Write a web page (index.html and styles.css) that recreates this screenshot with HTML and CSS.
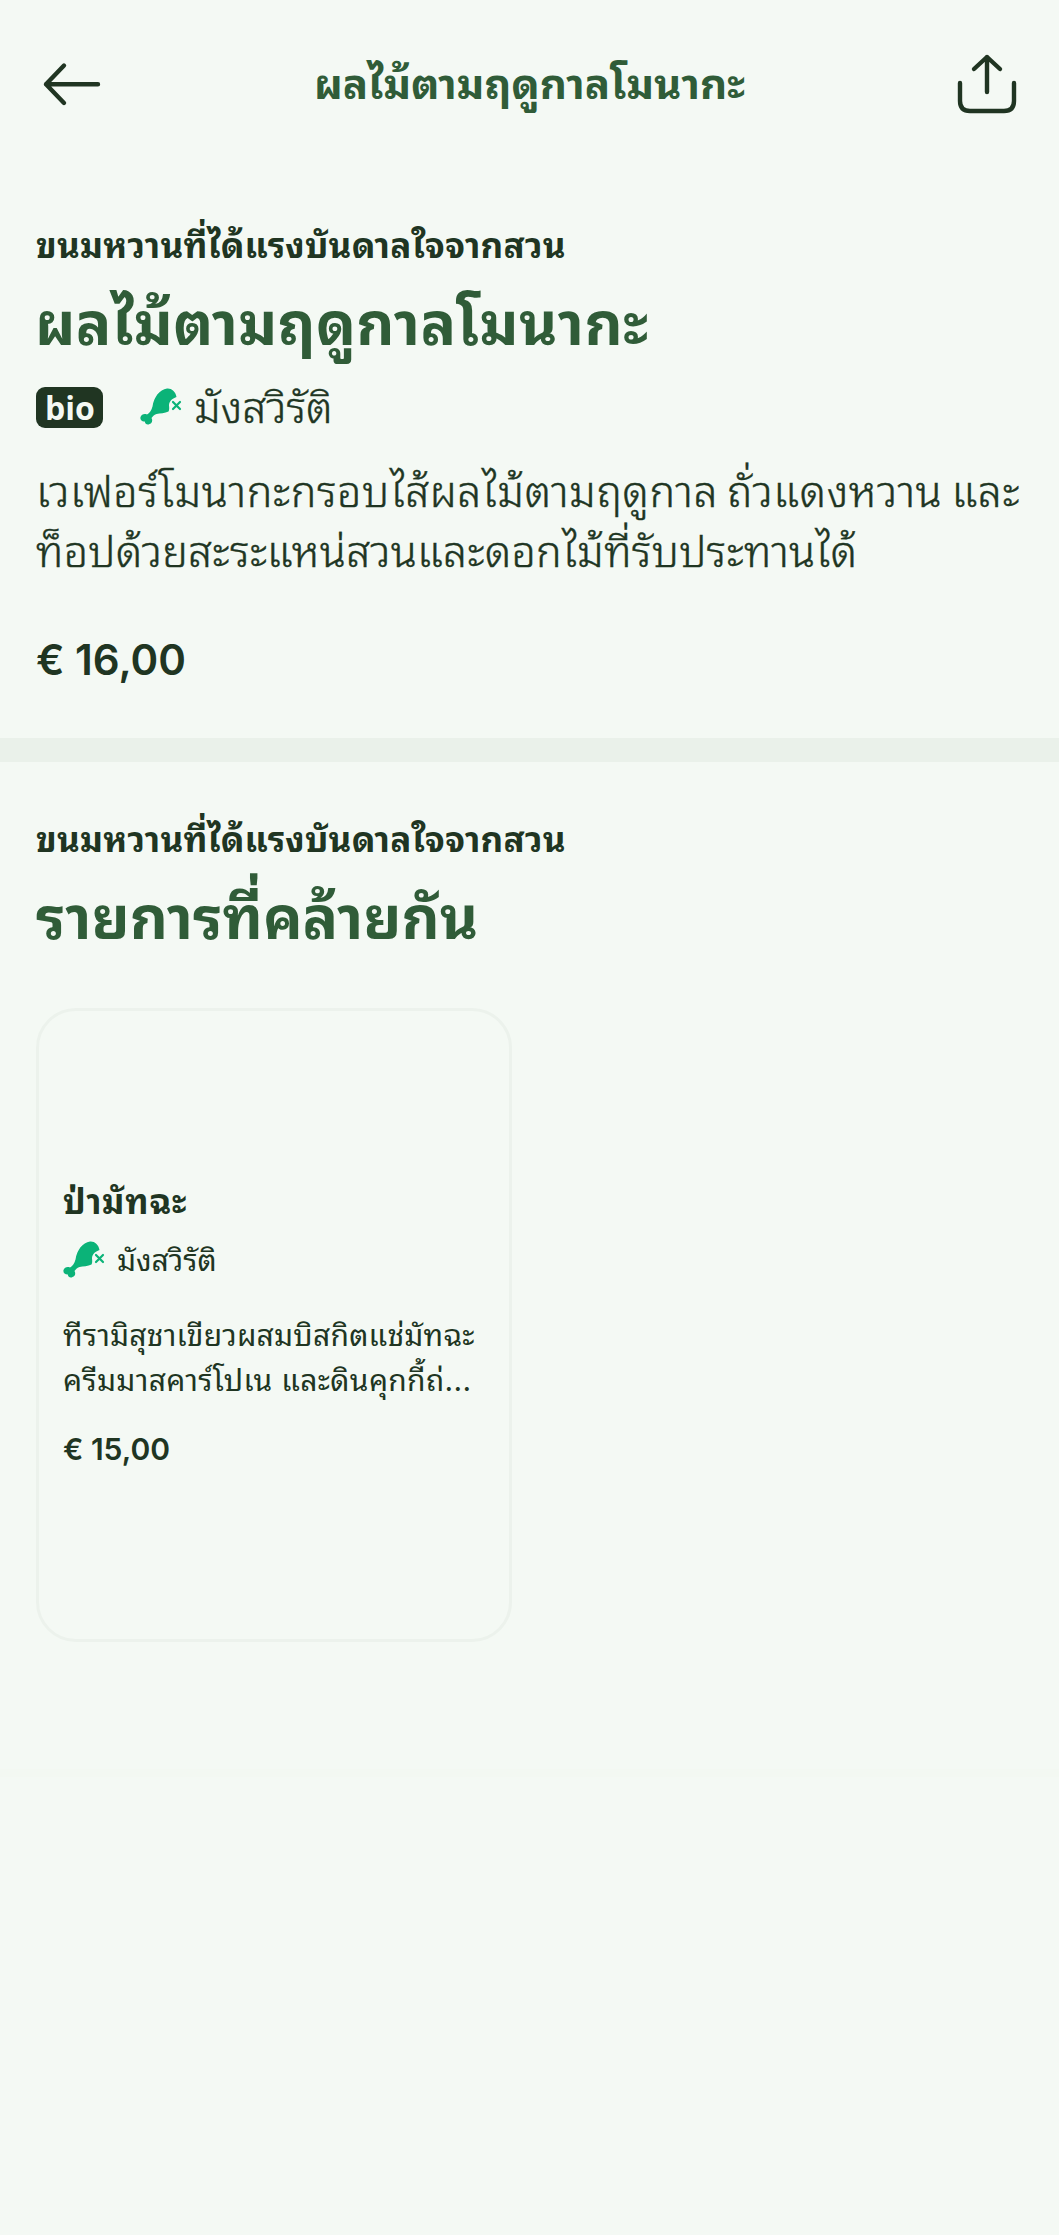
FILE: index.html
```html
<!DOCTYPE html>
<html lang="th">
<head>
<meta charset="utf-8">
<title>ผลไม้ตามฤดูกาลโมนากะ</title>
<link rel="stylesheet" href="styles.css">
</head>
<body>
<svg class="sprite" aria-hidden="true">
  <symbol id="vegetarian" viewBox="0 0 42 38">
    <path fill="currentColor" d="M27 .5C31 0 35.500 3 36.500 9C32 10.500 29 13.500 29 17.500C29.200 19.500 29.500 21.500 28.500 23.500C25 25.500 20 25.200 16.500 26C14 27 12.500 28.500 11.500 30C13 32.500 12 35.500 9.500 36C7.500 37.500 5 36 4.800 33.500C1.500 33.500 0 31.500 .5 29C1.500 26.500 4 25.500 7 26.500C9.500 25 11.500 22.500 12.500 18.500C14 9 19.500 1.500 27 .5Z"/>
    <path stroke="currentColor" stroke-width="2.200" stroke-linecap="round" d="M33 14L40 21M40 14L33 21"/>
  </symbol>
</svg>
<header class="topbar">
  <svg class="back" viewBox="0 0 60 48" fill="none"><path d="M22 5.500L4 24.300L22 43M4 24.300H56"/></svg>
  <h1 class="topbar-title">ผลไม้ตามฤดูกาลโมนากะ</h1>
  <svg class="share" viewBox="0 0 60 60" fill="none"><path d="M30 38V3M17 15L30 3L43 15M3 29V47Q3 57 13 57H47Q57 57 57 47V29"/></svg>
</header>
<main>
  <section class="item">
    <p class="eyebrow">ขนมหวานที่ได้แรงบันดาลใจจากสวน</p>
    <h2 class="title">ผลไม้ตามฤดูกาลโมนากะ</h2>
    <div class="meta">
      <b class="badge">bio</b>
      <svg class="veg"><use href="#vegetarian"/></svg>
      <span class="diet">มังสวิรัติ</span>
    </div>
    <p class="desc"><span class="line-a">เวเฟอร์โมนากะกรอบไส้ผลไม้ตามฤดูกาล ถั่วแดงหวาน และ</span><br><span class="line-b">ท็อปด้วยสะระแหน่สวนและดอกไม้ที่รับประทานได้</span></p>
    <p class="price">€ 16,00</p>
  </section>
  <section class="similar">
    <p class="eyebrow">ขนมหวานที่ได้แรงบันดาลใจจากสวน</p>
    <h2 class="title">รายการที่คล้ายกัน</h2>
    <article class="card">
      <h3 class="card-title">ป่ามัทฉะ</h3>
      <div class="card-meta"><svg class="veg"><use href="#vegetarian"/></svg><span class="diet">มังสวิรัติ</span></div>
      <p class="card-desc"><span class="line-a">ทีรามิสุชาเขียวผสมบิสกิตแช่มัทฉะ</span><br><span class="line-b">ครีมมาสคาร์โปเน และดินคุกกี้ถ่...</span></p>
      <p class="card-price">€ 15,00</p>
    </article>
  </section>
</main>
</body>
</html>
```
FILE: styles.css
```css
* { box-sizing: border-box; margin: 0; padding: 0; }
body {
  min-height: 2235px;
  background: #f4f9f4;
  color: #203522;
  font-family: Inter, "Noto Sans Thai Looped", Loma, sans-serif;
}
.sprite { display: block; width: 0; height: 0; }
.topbar {
  height: 168px;
  display: grid;
  grid-template-columns: 60px 1fr 60px;
  align-items: center;
  padding: 0 42px;
}
.back, .share { fill: none; stroke: #203522; stroke-width: 4.4; stroke-linecap: round; stroke-linejoin: round; }
.back { width: 60px; height: 48px; }
.share { width: 60px; height: 60px; }
.topbar-title { text-align: center; font-size: 42px; font-weight: 700; line-height: 60px; color: #305c38; white-space: nowrap; }
.item { height: 570px; padding: 55px 36px 0; }
.eyebrow { font-size: 35px; font-weight: 700; line-height: 44px; letter-spacing: .2px; white-space: nowrap; }
.title { margin-top: 21px; font-size: 59px; font-weight: 700; line-height: 72px; color: #305c38; white-space: nowrap; }
.item .title { margin-left: -1px; letter-spacing: .45px; }
.meta { margin-top: 22px; height: 50px; display: flex; align-items: center; }
.badge {
  width: 67px; height: 41px; margin-right: 37px; padding-left: 1px;
  border-radius: 9px; background: #203522; color: #f4f9f4;
  font-family: "Open Sans", sans-serif; font-size: 32px; line-height: 41px; text-align: center;
}
.veg { width: 42px; height: 38px; color: #0bb378; }
.meta .diet, .desc { font-size: 43px; font-weight: 300; -webkit-text-stroke: .4px currentColor; }
.meta .diet { margin-left: 12px; line-height: 50px; }
.desc { margin-top: 29px; line-height: 60px; letter-spacing: .54px; word-spacing: -3.5px; white-space: nowrap; }
.desc .line-b { letter-spacing: .22px; }
.price { margin-top: 48px; font-size: 42px; font-weight: 600; line-height: 62px; }
.similar { border-top: 24px solid #eaf1ea; border-bottom: 8px solid #f3f8f2; padding: 55px 36px 126px; }
.card {
  width: 476px; height: 634px; margin-top: 54px; margin-bottom: 1px; padding: 169px 24px 0;
  border: 3px solid #ecf2ec; border-radius: 40px;
}
.card-title { font-size: 34px; font-weight: 700; line-height: 44px; letter-spacing: .7px; }
.card-meta { margin-top: 14px; height: 44px; display: flex; align-items: center; }
.card-meta .diet { margin-left: 12px; font-size: 30px; line-height: 44px; }
.card-desc { margin-top: 31px; font-size: 30px; line-height: 45px; letter-spacing: .22px; white-space: nowrap; }
.card-desc .line-b { letter-spacing: .35px; }
.card-price { margin-top: 24px; font-size: 30px; font-weight: 600; line-height: 44px; }
```
